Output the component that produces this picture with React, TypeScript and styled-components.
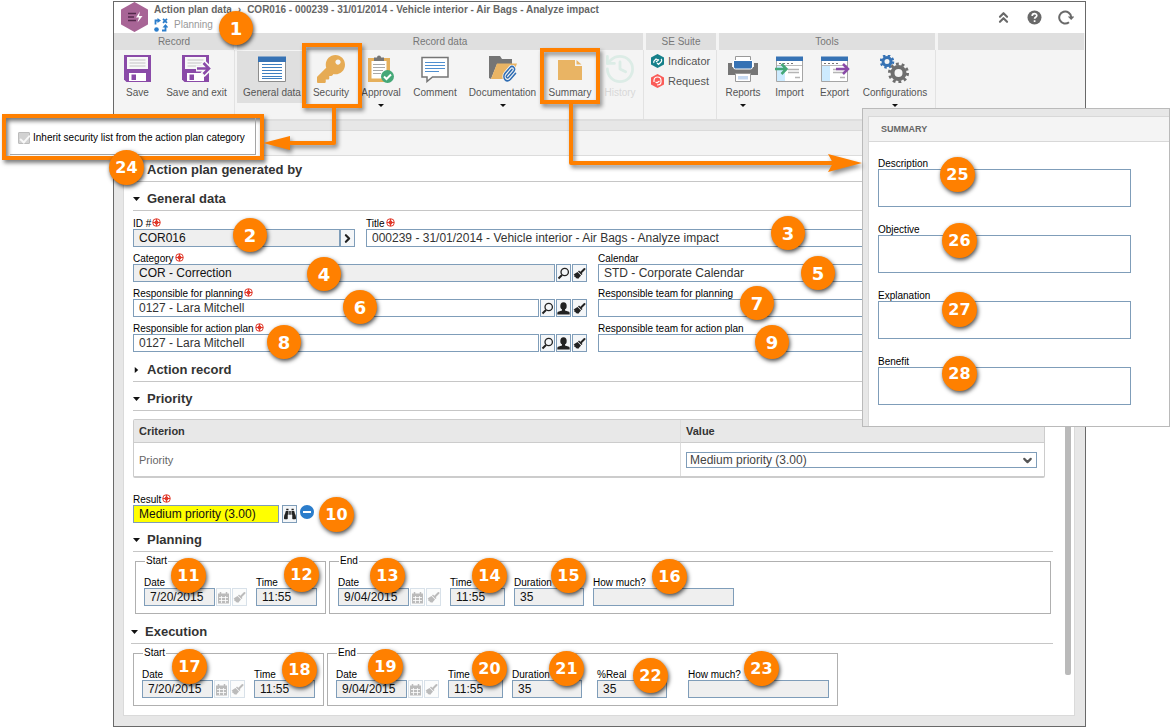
import React, { useId } from "react";
import styled, { createGlobalStyle, css } from "styled-components";
import { ChevronDown, ChevronRight, ChevronsUp, History, Paperclip } from "lucide-react";
import { FaBinoculars, FaKey } from "react-icons/fa";

const ORANGE = "#ff8000";
const FIELD_BORDER = "#7f9db9";

const Global = createGlobalStyle`
  * { box-sizing: border-box; }
  body {
    margin: 0;
    background: #fff;
    color: #000;
    font-family: "Liberation Sans", Arial, sans-serif;
    font-size: 10px;
    line-height: 12px;
  }
  button, input, select, textarea { font-family: inherit; color: inherit; }
  button { cursor: pointer; }
`;

/* ---------- window frame ---------- */

const Page = styled.main`
  position: relative;
  min-width: 1176px;
  padding: 1px 90px 0 113px;
`;

const Frame = styled.div`
  border: 1px solid #696969;
  background: #e7e7e7;
`;

const TitleBar = styled.header`
  display: flex;
  height: 31px;
  padding: 0 10px 0 6px;
  background: #fff;
`;

const TitleText = styled.div`
  flex: 1;
  padding: 2px 0 0 5px;
`;

const Breadcrumb = styled.h1`
  display: flex;
  gap: 6px;
  margin: 0;
  font-size: 10px;
  line-height: 12px;
  color: #666;
`;

const Stage = styled.div`
  display: flex;
  align-items: center;
  gap: 6px;
  height: 18px;
  color: #999;
`;

const TitleActions = styled.div`
  display: flex;
  align-items: center;
  gap: 12px;
`;

const PlainButton = styled.button`
  display: flex;
  align-items: center;
  justify-content: center;
  width: 19px;
  height: 19px;
  padding: 0;
  border: 0;
  background: none;
  color: #696969;
`;

/* ---------- ribbon ---------- */

const Ribbon = styled.nav`
  display: flex;
  gap: 2px;
  height: 88px;
  background: #f4f4f4;
  border-bottom: 2px solid #dedede;
`;

const Group = styled.section<{ $width?: number }>`
  display: flex;
  flex-direction: column;
  ${(p) => (p.$width ? `width: ${p.$width}px;` : "flex: 1;")}
`;

const GroupTitle = styled.h2`
  height: 17px;
  margin: 0 1px 0 0;
  background: #dfdfdf;
  color: #777;
  font-size: 10px;
  font-weight: normal;
  line-height: 17px;
  text-align: center;
`;

const GroupBody = styled.div<{ $column?: boolean; $last?: boolean }>`
  display: flex;
  flex: 1;
  flex-direction: ${(p) => (p.$column ? "column" : "row")};
  align-items: flex-start;
  padding: ${(p) => (p.$column ? "1px 0 0 5px" : "1px 0 0")};
  border-right: ${(p) => (p.$last ? "0" : "1px solid #e2e2e2")};
`;

const Tool = styled.button<{ $width: number; $active?: boolean; $faded?: boolean }>`
  display: flex;
  flex-direction: column;
  align-items: center;
  width: ${(p) => p.$width}px;
  height: 52px;
  padding: 4px 0 0;
  border: 0;
  background: ${(p) => (p.$active ? "#dfdfdf" : "none")};
  color: ${(p) => (p.$faded ? "#d8d8d8" : "#555")};
  font-size: 10px;
  line-height: 12px;
  white-space: nowrap;
  svg { flex: none; }
`;

const ToolLabel = styled.span`
  margin-top: 4px;
`;

const Caret = styled.span`
  flex: none;
  margin-top: 5px;
  border: 3px solid transparent;
  border-top-color: #111;
  border-bottom: 0;
`;

const ToolLink = styled.a`
  display: flex;
  align-items: center;
  gap: 4px;
  height: 20px;
  color: #555;
  font-size: 11px;
  text-decoration: none;
`;

/* ---------- record panel ---------- */

const Panel = styled.div`
  margin: 9px 10px 10px 9px;
  border: 1px solid #dadada;
  background: #fff;
`;

const PanelStrip = styled.div`
  height: 25px;
  border-bottom: 1px solid #dcdcdc;
  background: #f4f4f4;
`;

const PanelBody = styled.div`
  display: flex;
`;

const Sections = styled.div`
  display: flex;
  flex: 1;
  flex-direction: column;
  gap: 3px;
  min-width: 0;
  padding: 0 12px 8px 9px;
`;

const ScrollThumb = styled.div`
  width: 6px;
  margin: 0 3px 40px 0;
  border-radius: 2px;
  background: #bababa;
`;

const SectionBlock = styled.section<{ $outdent?: boolean }>`
  margin-left: ${(p) => (p.$outdent ? "-2px" : "0")};
`;

const SectionHead = styled.h2`
  display: flex;
  align-items: center;
  gap: 7px;
  height: 26px;
  margin: 0;
  padding: 3px 0 0;
  border-bottom: 1px solid #c6c6c6;
  color: #333;
  font-size: 13px;
  line-height: 20px;
`;

const Twisty = styled.i<{ $open: boolean }>`
  width: 7px;
  height: 6px;
  background: #111;
  clip-path: ${(p) => (p.$open ? "polygon(0 15%, 100% 15%, 50% 85%)" : "polygon(25% 0, 75% 50%, 25% 100%)")};
`;

const FieldGrid = styled.div`
  display: flex;
  flex-direction: column;
  gap: 5px;
  padding: 6px 1px 1px 0;
`;

const FieldRow = styled.div<{ $columns: string }>`
  display: grid;
  grid-template-columns: ${(p) => p.$columns};
  gap: 11px;
`;

const FieldBox = styled.div<{ $width?: number }>`
  min-width: 0;
  ${(p) => p.$width && `width: ${p.$width}px; flex: none;`}
`;

const Label = styled.label`
  display: flex;
  align-items: center;
  gap: 1px;
  height: 12px;
  padding-top: 1px;
  font-size: 10px;
  line-height: 12px;
  white-space: nowrap;
  svg { margin-bottom: 2px; }
`;

const Controls = styled.div<{ $gap: number }>`
  display: flex;
  gap: ${(p) => p.$gap}px;
`;

const TextInput = styled.input<{ $tone?: "grey" | "yellow"; $width?: number }>`
  ${(p) => (p.$width ? `width: ${p.$width}px;` : "flex: 1;")}
  min-width: 0;
  height: 18px;
  padding: 0 5px;
  border: 1px solid ${FIELD_BORDER};
  border-radius: 0;
  background: ${(p) => (p.$tone === "grey" ? "#efefef" : p.$tone === "yellow" ? "#ff0" : "#fff")};
  color: ${(p) => (p.$tone ? "#111" : "#333")};
  font-size: 12px;
`;

const IconButton = styled.button<{ $faded?: boolean }>`
  display: flex;
  flex: none;
  align-items: center;
  justify-content: center;
  width: 15px;
  height: 18px;
  padding: 0;
  border: 1px solid ${FIELD_BORDER};
  background: #f4f6f8;
  color: #222;
  opacity: ${(p) => (p.$faded ? 0.3 : 1)};
`;

const RoundButton = styled.button`
  width: 14px;
  height: 14px;
  padding: 0;
  border: 0;
  border-radius: 50%;
  background: #2b7dcb;
  svg { display: block; }
`;

/* ---------- priority table ---------- */

const PriorityTable = styled.table`
  width: calc(100% - 8px);
  margin: 8px 8px 15px 0;
  border: 1px solid #ccc;
  border-bottom-width: 2px;
  border-radius: 2px;
  border-collapse: separate;
  border-spacing: 0;
  table-layout: fixed;
  font-size: 11px;
  text-align: left;
  th, td { padding: 0 7px 0 5px; }
  th + th, td + td { border-left: 1px solid #ddd; }
  th {
    height: 23px;
    background: #e8e8e8;
    border-bottom: 1px solid #ccc;
    color: #333;
  }
  th:first-child { width: 60%; }
  td { height: 33px; color: #666; }
`;

const SelectWrap = styled.div`
  position: relative;
  svg { position: absolute; right: 3px; top: 2px; pointer-events: none; color: #555; }
`;

const Select = styled.select`
  display: block;
  width: 100%;
  height: 16px;
  padding: 0 3px;
  border: 1px solid ${FIELD_BORDER};
  border-radius: 0;
  background: #fff;
  appearance: none;
  color: #444;
  font-size: 12px;
  line-height: 14px;
`;

/* ---------- start / end groups ---------- */

const PeriodRow = styled.div`
  display: flex;
  gap: 3px;
  padding: 3px 2px 1px;
`;

const Period = styled.fieldset<{ $fill?: boolean }>`
  ${(p) => p.$fill && "flex: 1;"}
  min-width: 0;
  margin: 0;
  padding: 9px 8px 7px;
  border: 1px solid #b0b0b0;
  legend { margin-left: 1px; padding: 0 1px; }
`;

const PeriodFields = styled.div`
  display: flex;
  gap: 9px;
`;

const RealField = styled.div`
  padding: 0 12px 0 6px;
`;

/* ---------- annotations ---------- */

const shadow = css`
  filter: drop-shadow(2px 3px 2px rgba(0, 0, 0, 0.45));
`;

const Badge = styled.span<{ $x: number; $y: number; $wide: boolean }>`
  position: absolute;
  left: ${(p) => p.$x - 17}px;
  top: ${(p) => p.$y - 17}px;
  z-index: 3;
  width: ${(p) => (p.$wide ? 35 : 34)}px;
  height: ${(p) => (p.$wide ? 35 : 34)}px;
  border-radius: 50%;
  background: ${ORANGE};
  box-shadow: 1px 2px 4px rgba(0, 0, 0, 0.7);
  color: #fff;
  font: bold ${(p) => (p.$wide ? 16 : 18)}px/36px "DejaVu Sans", Verdana, sans-serif;
  text-align: center;
`;

const Highlight = styled.div<{ $x: number; $y: number; $w: number; $h: number }>`
  position: absolute;
  left: ${(p) => p.$x}px;
  top: ${(p) => p.$y}px;
  width: ${(p) => p.$w}px;
  height: ${(p) => p.$h}px;
  border: 4px solid ${ORANGE};
  pointer-events: none;
  ${shadow}
`;

const Connector = styled.svg<{ $x: number; $y: number }>`
  position: absolute;
  left: ${(p) => p.$x}px;
  top: ${(p) => p.$y}px;
  z-index: 2;
  overflow: visible;
  fill: none;
  stroke: ${ORANGE};
  stroke-width: 4;
  stroke-linejoin: round;
  ${shadow}
  polygon { fill: ${ORANGE}; stroke: none; }
`;

const SecurityNote = styled.aside`
  position: absolute;
  left: 2px;
  top: 114px;
  width: 262px;
  height: 46px;
  padding: 0 4px 2px 4px;
  border: 4px solid ${ORANGE};
  background: #fff;
  box-shadow: 2px 3px 4px rgba(0, 0, 0, 0.5), inset 2px 3px 4px rgba(0, 0, 0, 0.55);
`;

const NoteBody = styled.label`
  display: flex;
  align-items: center;
  gap: 3px;
  height: 37px;
  padding: 4px 0 0 8px;
  border-right: 1px solid #a5a5a5;
  border-bottom: 1px solid #a5a5a5;
  white-space: nowrap;
`;

const Tick = styled.input`
  position: relative;
  width: 12px;
  height: 12px;
  margin: 0;
  border: 1px solid #bcbcbc;
  border-radius: 1px;
  background: #d2d2d2;
  appearance: none;
  &::after {
    content: "";
    position: absolute;
    left: 3px;
    top: 0;
    width: 4px;
    height: 8px;
    border: solid #f8f8f8;
    border-width: 0 2px 2px 0;
    transform: rotate(42deg);
  }
`;

const SummaryPopup = styled.aside`
  position: absolute;
  left: 862px;
  top: 108px;
  z-index: 1;
  width: 308px;
  padding: 7px 0 0 5px;
  border: 1px solid #bababa;
  background: #e7e7e7;
`;

const SummaryCard = styled.div`
  border-left: 1px solid #d8d8d8;
  border-top: 1px solid #d8d8d8;
  background: #fff;
`;

const SummaryTitle = styled.h2`
  height: 25px;
  margin: 0;
  padding-left: 12px;
  border-bottom: 1px solid #d8d8d8;
  background: #f4f4f4;
  color: #666;
  font-size: 9px;
  line-height: 24px;
`;

const SummaryFields = styled.div`
  display: flex;
  flex-direction: column;
  gap: 16px;
  padding: 15px 38px 21px 9px;
`;

const TextArea = styled.textarea`
  display: block;
  width: 100%;
  height: 38px;
  padding: 2px 5px;
  border: 1px solid ${FIELD_BORDER};
  background: #fff;
  resize: none;
  font-size: 12px;
`;

/* ---------- icons ---------- */

const Svg = ({ w = 28, h = 28, children }: { w?: number; h?: number; children: React.ReactNode }) => (
  <svg width={w} height={h} viewBox={`0 0 ${w} ${h}`} fill="none" aria-hidden="true">
    {children}
  </svg>
);

const AppIcon = () => (
  <Svg w={29} h={30}>
    <path d="M14.500 1 27 8v14l-12.500 7L2 22V8z" fill="#a86596" stroke="#a86596" strokeWidth="2" strokeLinejoin="round" />
    <path d="M8 11.500h8M8 15h6M8 18.500h8" stroke="#54294c" strokeWidth="1.500" />
    <path d="M20 9.500l-4 6h3l-1.500 5 5-6.500h-3.500z" fill="#fff" />
  </Svg>
);

const FlowIcon = () => (
  <Svg w={14} h={14}>
    <g stroke="#2b7dcb" strokeWidth="1.800">
      <path d="M1.500 6.500V2.500h3M9 .8l4 4M13 .8 9 4.800M8 12.500h3.500V9" />
    </g>
    <path d="M3.500 0v5l3.500-2.500zM8.500 9.500h6L11.500 6z" fill="#2b7dcb" />
    <circle cx="2.500" cy="11.500" r="2.300" fill="#2b7dcb" />
  </Svg>
);

const Floppy = () => (
  <>
    <path d="M0 0h27v27H2.500L0 24.500z" fill="#8a4aa8" />
    <path d="M3 2h21v12H3z" fill="#f8f8f8" />
    <path d="M5.500 5h16M5.500 8h16M5.500 11h16" stroke="#c4c4c4" />
    <path d="M5 18h17v8H5z" fill="#fff" />
    <path d="M7.500 19.500h4.500V25H7.500z" fill="#8a4aa8" />
  </>
);

const SaveIcon = () => (
  <Svg>
    <Floppy />
  </Svg>
);

const SaveExitIcon = () => (
  <Svg w={29}>
    <Floppy />
    <path d="M27 0h2v27h-2z" fill="#f4f4f4" />
    <path d="M14 13.500h13M20.500 7l6.500 6.500L20.500 20" stroke="#f8f8f8" strokeWidth="6" />
    <path d="M15 13.500h12M21.500 8 27 13.500 21.500 19" stroke="#8a4aa8" strokeWidth="2.600" />
  </Svg>
);

const FormIcon = () => (
  <Svg>
    <path d="M.5 2.500h27v24H.5z" fill="#fff" stroke="#8c8c8c" />
    <path d="M0 1.500h28v5.500H0z" fill="#3672b4" />
    <path d="M4 9.500h20M4 12.500h20M4 15.500h20M4 18.500h20M4 21.500h20M4 23.500h20" stroke="#3f7fc0" />
  </Svg>
);

const ApprovalIcon = () => (
  <Svg>
    <path d="M1 3h22v24H1z" fill="#e6b05c" />
    <path d="M4.500 6h15v17.500h-15z" fill="#fff" />
    <path d="M7 2.500h3a2 2 0 0 1 4 0h3V6H7z" fill="#757575" />
    <path d="M6 9.500h12M6 12.500h12M6 15.500h10M6 18.500h8" stroke="#a9a9a9" />
    <circle cx="20.500" cy="21.500" r="6.500" fill="#45a878" />
    <path d="m17 21.500 2.500 2.500 4.500-4.500" stroke="#fff" strokeWidth="2" />
  </Svg>
);

const CommentIcon = () => (
  <Svg>
    <path d="M1 2.500h26v19.500H11.500L6 26.500V22H1z" fill="#fff" stroke="#757575" strokeWidth="1.500" />
    <path d="M4 7.500h20M4 10.500h20M4 13.500h20M4 16.500h14" stroke="#4f8fd0" strokeWidth="1.200" />
  </Svg>
);

const DocumentationIcon = () => (
  <Svg>
    <path d="M0 23V1h11l2 3h10v5H8L2 24z" fill="#757575" />
    <path d="M8 8.500h20L22 24H2z" fill="#e9b464" />
    <g transform="translate(13 10) scale(1 1.150)">
      <Paperclip size={15} color="#f4f4f4" strokeWidth={5} />
    </g>
    <g transform="translate(13 10) scale(1 1.150)">
      <Paperclip size={15} color="#2f6db3" strokeWidth={2.3} />
    </g>
  </Svg>
);

const SummaryIcon = () => (
  <Svg>
    <path d="M2 5h17v6h7v14H2z" fill="#e9b464" />
    <path d="m20.500 5 5 4.500h-5z" fill="#e9b464" />
  </Svg>
);

const PrinterIcon = () => (
  <Svg w={30}>
    <path d="M7.500 1.500h15v8h-15z" fill="#fff" stroke="#999" />
    <path d="M0 8h4v4h22V8h4v12H0z" fill="#757575" />
    <path d="M5.500 5.500h19V12a2 2 0 0 1-2 2h-15a2 2 0 0 1-2-2z" fill="#3672b4" stroke="#fff" />
    <path d="M7.500 18.500h15v8h-15z" fill="#fff" stroke="#999" />
    <path d="M10 21h10v3.500H10z" fill="#c5d9f2" />
  </Svg>
);

const TransferIcon = ({ out }: { out?: boolean }) => (
  <Svg w={30}>
    <path d="M1.500 2.500h26v24h-26z" fill="#fff" stroke="#a5a5a5" />
    <path d="M1 1.500h27V6H1z" fill="#3672b4" />
    <path d="M2 10.500h25" stroke="#bbb" />
    <path d="M4 8.500h14" stroke="#777" strokeDasharray="2 2" />
    <path d="M2 11h8v15H2z" fill="#cdebff" />
    <path d="M13 14.500h11M13 17.500h11M20 22.500h5" stroke="#b5b5b5" strokeWidth="1.500" />
    {out ? (
      <path d="M16 14h12M23 9l5 5-5 5" stroke="#8a4aa8" strokeWidth="2.500" />
    ) : (
      <path d="M0 14h11M6.500 9l5 5-5 5" stroke="#45a878" strokeWidth="2.500" />
    )}
  </Svg>
);

const GearsIcon = () => (
  <Svg w={30}>
    <circle cx="7" cy="6.500" r="4" stroke="#3672b4" strokeWidth="3" />
    <circle cx="7" cy="6.500" r="6" stroke="#3672b4" strokeWidth="2.500" strokeDasharray="2.360 2.360" />
    <circle cx="18.500" cy="18" r="6" stroke="#6e6e6e" strokeWidth="4" />
    <circle cx="18.500" cy="18" r="9" stroke="#6e6e6e" strokeWidth="3" strokeDasharray="2.830 2.830" />
  </Svg>
);

const HexIcon = ({ color, children }: { color: string; children: React.ReactNode }) => (
  <Svg w={13} h={14}>
    <path d="M6.500 0 13 3.500v7L6.500 14 0 10.500v-7z" fill={color} />
    {children}
  </Svg>
);

const HelpIcon = () => (
  <Svg w={15} h={15}>
    <circle cx="7.500" cy="7.500" r="7" fill="#696969" />
    <path d="M5.200 6c0-3.200 4.600-3 4.600-.4 0 1.700-2.200 1.700-2.200 3.200M7.600 10.200v1.700" stroke="#fff" strokeWidth="1.700" />
  </Svg>
);

const RefreshIcon = () => (
  <Svg w={16} h={15}>
    <path d="M11 12.200A6 6 0 1 1 13.200 7" stroke="#696969" strokeWidth="2" />
    <path d="M9.800 6.500H16.500L13.200 10z" fill="#696969" />
  </Svg>
);

const RequiredMark = () => (
  <Svg w={9} h={9}>
    <circle cx="4.500" cy="4.500" r="3.800" stroke="#e0392b" />
    <path d="M4.500 1v7M1 4.500h7" stroke="#e0392b" strokeWidth="1.200" />
    <circle cx="4.500" cy="4.500" r="2" fill="#e0392b" />
  </Svg>
);

const SearchIcon = () => (
  <Svg w={13} h={13}>
    <circle cx="7.700" cy="5" r="3.700" stroke="#222" strokeWidth="1.300" />
    <path d="M5 8 1.500 11.500" stroke="#222" strokeWidth="2" />
  </Svg>
);

const PersonIcon = () => (
  <Svg w={13} h={13}>
    <ellipse cx="6.500" cy="4" rx="3.200" ry="3.800" fill="#222" />
    <path d="M5 7h3v1.500l4 1.300c.6.300.7 1.200.7 2.700H.3c0-1.500.1-2.400.7-2.700l4-1.300z" fill="#222" />
  </Svg>
);

const BrushIcon = () => (
  <Svg w={13} h={13}>
    <path d="M8 5.500 11.500 2" stroke="#222" strokeWidth="2" strokeLinecap="round" />
    <path d="M6 3.500 9.500 7 8.500 8 5 4.500z" fill="#222" />
    <path d="M4.500 5 8 8.500 5 12l-1-1-1 .5-.5-1.500L1 9.500 1.500 8 .5 7.500z" fill="#222" />
  </Svg>
);

const CalendarIcon = () => (
  <Svg w={13} h={13}>
    <path d="M1 2.500h11v10H1z" fill="#222" />
    <path d="M3.500 1v2.500M9.500 1v2.500" stroke="#222" strokeWidth="1.500" />
    <path d="M2 6.500h9M2 9.500h9M4.500 5v7M8.500 5v7" stroke="#fff" strokeWidth=".8" />
  </Svg>
);

/* ---------- composed parts ---------- */

type IconName = "search" | "person" | "brush" | "open";

const buttonIcons: Record<IconName, [string, React.ReactNode]> = {
  search: ["Search", <SearchIcon />],
  person: ["Select user", <PersonIcon />],
  brush: ["Clear", <BrushIcon />],
  open: ["Open", <ChevronRight size={17} strokeWidth={4} />],
};

interface FieldProps {
  label: string;
  value?: string;
  required?: boolean;
  tone?: "grey" | "yellow";
  width?: number;
  buttons?: IconName[];
  gap?: number;
}

function Field({ label, value = "", required, tone, width, buttons = [], gap = 1 }: FieldProps) {
  const id = useId();
  return (
    <FieldBox $width={width}>
      <Label htmlFor={id}>
        {label}
        {required && <RequiredMark />}
      </Label>
      <Controls $gap={gap}>
        <TextInput id={id} defaultValue={value} $tone={tone} />
        {buttons.map((name) => (
          <IconButton key={name} type="button" aria-label={`${buttonIcons[name][0]}: ${label}`}>
            {buttonIcons[name][1]}
          </IconButton>
        ))}
      </Controls>
    </FieldBox>
  );
}

function DateField({ value }: { value: string }) {
  const id = useId();
  return (
    <FieldBox>
      <Label htmlFor={id}>Date</Label>
      <Controls $gap={1}>
        <TextInput id={id} defaultValue={value} $tone="grey" $width={71} />
        <IconButton type="button" $faded aria-label="Pick date">
          <CalendarIcon />
        </IconButton>
        <IconButton type="button" $faded aria-label="Clear date">
          <BrushIcon />
        </IconButton>
      </Controls>
    </FieldBox>
  );
}

interface SectionProps {
  title: string;
  open?: boolean;
  outdent?: boolean;
  children?: React.ReactNode;
}

function Section({ title, open = true, outdent, children }: SectionProps) {
  return (
    <SectionBlock $outdent={outdent}>
      <SectionHead>
        <Twisty $open={open} />
        {title}
      </SectionHead>
      {children}
    </SectionBlock>
  );
}

interface ToolItem {
  label: string;
  width: number;
  icon: React.ReactNode;
  active?: boolean;
  faded?: boolean;
  menu?: boolean;
}

const recordTools: ToolItem[] = [
  { label: "Save", width: 47, icon: <SaveIcon /> },
  { label: "Save and exit", width: 71, icon: <SaveExitIcon /> },
];

const dataTools: ToolItem[] = [
  { label: "General data", width: 70, icon: <FormIcon />, active: true },
  { label: "Security", width: 48, icon: <FaKey size={28} color="#e6ab54" /> },
  { label: "Approval", width: 52, icon: <ApprovalIcon />, menu: true },
  { label: "Comment", width: 56, icon: <CommentIcon /> },
  { label: "Documentation", width: 79, icon: <DocumentationIcon />, menu: true },
  { label: "Summary", width: 56, icon: <SummaryIcon /> },
  {
    label: "History",
    width: 44,
    icon: (
      <svg width={28} height={28} viewBox="2 2 20 20" aria-hidden="true">
        <History size={24} color="#dcece6" strokeWidth={2} />
      </svg>
    ),
    faded: true,
  },
];

const generalTools: ToolItem[] = [
  { label: "Reports", width: 48, icon: <PrinterIcon />, menu: true },
  { label: "Import", width: 45, icon: <TransferIcon /> },
  { label: "Export", width: 45, icon: <TransferIcon out /> },
  { label: "Configurations", width: 76, icon: <GearsIcon />, menu: true },
];

const Tools = ({ items }: { items: ToolItem[] }) => (
  <>
    {items.map((t) => (
      <Tool key={t.label} type="button" $width={t.width} $active={t.active} $faded={t.faded}>
        {t.icon}
        <ToolLabel>{t.label}</ToolLabel>
        {t.menu && <Caret />}
      </Tool>
    ))}
  </>
);

function SummaryField({ label }: { label: string }) {
  const id = useId();
  return (
    <div>
      <Label htmlFor={id}>{label}</Label>
      <TextArea id={id} />
    </div>
  );
}

const badges: [number, number, number][] = [
  [1, 236, 28], [2, 250, 235], [3, 788, 233], [4, 324, 274], [5, 818, 273],
  [6, 360, 307], [7, 757, 303], [8, 284, 342], [9, 772, 342], [10, 336, 514],
  [11, 188, 575], [12, 301, 574], [13, 387, 575], [14, 489, 575], [15, 568, 575],
  [16, 669, 576], [17, 189, 666], [18, 299, 669], [19, 385, 666], [20, 489, 668],
  [21, 566, 668], [22, 650, 675], [23, 761, 668], [24, 126, 167], [25, 957, 174],
  [26, 959, 240], [27, 959, 309], [28, 959, 373],
];

export default function App() {
  return (
    <Page>
      <Global />
      <Frame>
        <TitleBar>
          <AppIcon />
          <TitleText>
            <Breadcrumb>
              <span>Action plan data</span>
              <span>›</span>
              <span>COR016 - 000239 - 31/01/2014 - Vehicle interior - Air Bags - Analyze impact</span>
            </Breadcrumb>
            <Stage>
              <FlowIcon />
              Planning
            </Stage>
          </TitleText>
          <TitleActions>
            <PlainButton type="button" aria-label="Collapse">
              <ChevronsUp size={17} strokeWidth={3} />
            </PlainButton>
            <PlainButton type="button" aria-label="Help">
              <HelpIcon />
            </PlainButton>
            <PlainButton type="button" aria-label="Refresh">
              <RefreshIcon />
            </PlainButton>
          </TitleActions>
        </TitleBar>

        <Ribbon>
          <Group $width={121}>
            <GroupTitle>Record</GroupTitle>
            <GroupBody>
              <Tools items={recordTools} />
            </GroupBody>
          </Group>
          <Group $width={407}>
            <GroupTitle>Record data</GroupTitle>
            <GroupBody>
              <Tools items={dataTools} />
            </GroupBody>
          </Group>
          <Group $width={71}>
            <GroupTitle>SE Suite</GroupTitle>
            <GroupBody $column>
              <ToolLink href="#indicator">
                <HexIcon color="#16808a">
                  <path d="M3 9a2 2 0 0 1 0-2l2-2 2 1M10 5a2 2 0 0 1 0 3L7.500 10.500 6 9M5 8l3-2.500" stroke="#fff" strokeWidth="1.200" />
                </HexIcon>
                Indicator
              </ToolLink>
              <ToolLink href="#request">
                <HexIcon color="#fa5c58">
                  <path d="M3 8V6.500a3.500 3.500 0 0 1 7 0V8c0 2-2 3-4 3M4.500 8l1.500.8L8.500 7" stroke="#fff" strokeWidth="1.200" />
                </HexIcon>
                Request
              </ToolLink>
            </GroupBody>
          </Group>
          <Group $width={217}>
            <GroupTitle>Tools</GroupTitle>
            <GroupBody>
              <Tools items={generalTools} />
            </GroupBody>
          </Group>
          <Group>
            <GroupTitle />
            <GroupBody $last />
          </Group>
        </Ribbon>

        <Panel>
          <PanelStrip />
          <PanelBody>
            <Sections>
              <Section title="Action plan generated by" />
              <Section title="General data">
                <FieldGrid>
                  <FieldRow $columns="222px 1fr">
                    <Field label="ID #" value="COR016" required tone="grey" buttons={["open"]} gap={0} />
                    <Field label="Title" value="000239 - 31/01/2014 - Vehicle interior - Air Bags - Analyze impact" required />
                  </FieldRow>
                  <FieldRow $columns="1fr 1fr">
                    <Field label="Category" value="COR - Correction" required tone="grey" buttons={["search", "brush"]} />
                    <Field label="Calendar" value="STD - Corporate Calendar" />
                  </FieldRow>
                  <FieldRow $columns="1fr 1fr">
                    <Field label="Responsible for planning" value="0127 - Lara Mitchell" required buttons={["search", "person", "brush"]} />
                    <Field label="Responsible team for planning" />
                  </FieldRow>
                  <FieldRow $columns="1fr 1fr">
                    <Field label="Responsible for action plan" value="0127 - Lara Mitchell" required buttons={["search", "person", "brush"]} />
                    <Field label="Responsible team for action plan" />
                  </FieldRow>
                </FieldGrid>
              </Section>
              <Section title="Action record" open={false} />
              <Section title="Priority">
                <PriorityTable>
                  <thead>
                    <tr>
                      <th>Criterion</th>
                      <th>Value</th>
                    </tr>
                  </thead>
                  <tbody>
                    <tr>
                      <td>Priority</td>
                      <td>
                        <SelectWrap>
                          <Select aria-label="Priority value" defaultValue="medium">
                            <option value="medium">Medium priority (3.00)</option>
                          </Select>
                          <ChevronDown size={13} strokeWidth={4} />
                        </SelectWrap>
                      </td>
                    </tr>
                  </tbody>
                </PriorityTable>
                <Label htmlFor="result">
                  Result
                  <RequiredMark />
                </Label>
                <Controls $gap={3}>
                  <TextInput id="result" defaultValue="Medium priority (3.00)" $tone="yellow" $width={146} />
                  <IconButton type="button" aria-label="Evaluate result">
                    <FaBinoculars size={12} />
                  </IconButton>
                  <RoundButton type="button" aria-label="Remove result">
                    <Svg w={14} h={14}>
                      <path d="M3 7h8" stroke="#fff" strokeWidth="2" />
                    </Svg>
                  </RoundButton>
                </Controls>
              </Section>
              <Section title="Planning">
                <PeriodRow>
                  <Period>
                    <legend>Start</legend>
                    <PeriodFields>
                      <DateField value="7/20/2015" />
                      <Field label="Time" value="11:55" tone="grey" width={61} />
                    </PeriodFields>
                  </Period>
                  <Period $fill>
                    <legend>End</legend>
                    <PeriodFields>
                      <DateField value="9/04/2015" />
                      <Field label="Time" value="11:55" tone="grey" width={55} />
                      <Field label="Duration" value="35" tone="grey" width={70} />
                      <Field label="How much?" tone="grey" width={141} />
                    </PeriodFields>
                  </Period>
                </PeriodRow>
              </Section>
              <Section title="Execution" outdent>
                <PeriodRow>
                  <Period>
                    <legend>Start</legend>
                    <PeriodFields>
                      <DateField value="7/20/2015" />
                      <Field label="Time" value="11:55" tone="grey" width={61} />
                    </PeriodFields>
                  </Period>
                  <Period>
                    <legend>End</legend>
                    <PeriodFields>
                      <DateField value="9/04/2015" />
                      <Field label="Time" value="11:55" tone="grey" width={55} />
                      <Field label="Duration" value="35" tone="grey" width={70} />
                      <RealField>
                        <Field label="%Real" value="35" tone="grey" width={70} />
                      </RealField>
                      <Field label="How much?" tone="grey" width={141} />
                    </PeriodFields>
                  </Period>
                </PeriodRow>
              </Section>
            </Sections>
            <ScrollThumb />
          </PanelBody>
        </Panel>
      </Frame>

      <SummaryPopup>
        <SummaryCard>
          <SummaryTitle>SUMMARY</SummaryTitle>
          <SummaryFields>
            <SummaryField label="Description" />
            <SummaryField label="Objective" />
            <SummaryField label="Explanation" />
            <SummaryField label="Benefit" />
          </SummaryFields>
        </SummaryCard>
      </SummaryPopup>

      <SecurityNote>
        <NoteBody>
          <Tick type="checkbox" defaultChecked disabled />
          Inherit security list from the action plan category
        </NoteBody>
      </SecurityNote>

      <Highlight $x={302} $y={43} $w={60} $h={65} />
      <Connector $x={263} $y={108} width="74" height="46">
        <path d="M71 0v35H22" />
        <polygon points="0,35 27,28 27,42" />
      </Connector>
      <Highlight $x={540} $y={48} $w={60} $h={56} />
      <Connector $x={568} $y={104} width="294" height="70">
        <path d="M3 0v59H270" />
        <polygon points="294,59 260,50 265,59 260,68" />
      </Connector>

      {badges.map(([n, x, y]) => (
        <Badge key={n} $x={x} $y={y} $wide={n > 9}>
          {n}
        </Badge>
      ))}
    </Page>
  );
}
